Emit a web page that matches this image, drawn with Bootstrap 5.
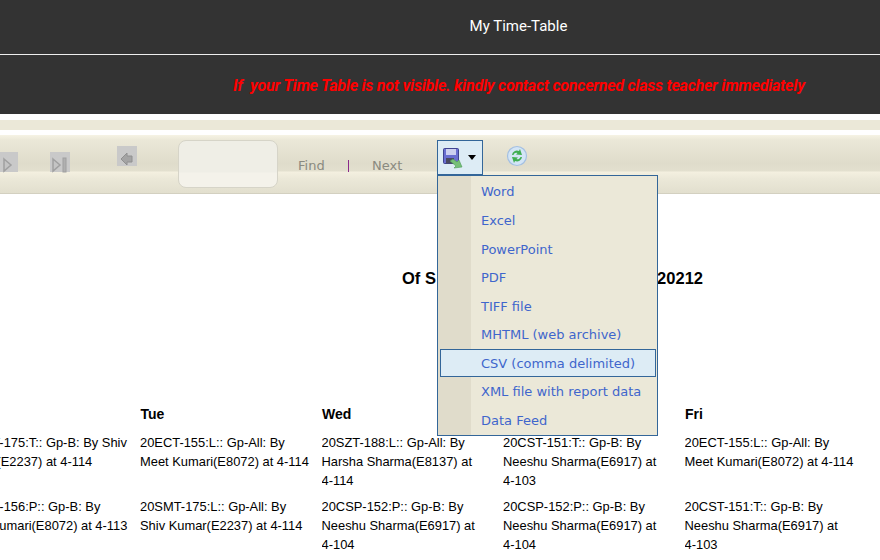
<!DOCTYPE html>
<html lang="en">
<head>
    <meta charset="UTF-8">
    <title>My Time-Table</title>
    <link href="https://cdn.jsdelivr.net/npm/bootstrap@5.3.3/dist/css/bootstrap.min.css" rel="stylesheet">
    <style>
        html, body { overflow: hidden; }
        body { width: 880px; height: 560px; background: #fff; font-family: "Liberation Sans", Arial, sans-serif; }
        .hdr-title { height: 54px; background: #333; color: #fff; font: 15px/52px Roboto, sans-serif; padding-left: 157px; }
        .hdr-rule { height: 1px; background: #eee; }
        .hdr-notice { height: 59px; background: #333; color: #f00; font: italic 700 16px/61px Roboto, sans-serif; letter-spacing: -.24px; padding-left: 233px; white-space: nowrap; }
        .strip-gap { height: 6px; }
        .strip-tan { height: 10px; background: #ebe8d8; }
        .strip-gap2 { height: 5px; }
        .tbar { height: 59px; position: relative; border-bottom: 1px solid #d3d0c0;
            background: linear-gradient(#f6f3e4 0, #ebe8d8 5px, #dfdccb 28px, #e3e0cf 36px, #f4f0e0 37px, #ebe8d8 44px, #e2dfce 58px); }
        .tb-btn { position: absolute; width: 20px; height: 20px; background: #c9c9c9; }
        .tb-find { position: absolute; left: 178px; top: 5px; width: 100px; height: 48px; border: 1px solid #d6d4c8; border-radius: 8px;
            background: linear-gradient(#efeee6 0, #efeee6 31px, #f4f2ea 32px); }
        .tb-link { position: absolute; top: 23px; font: 13px "DejaVu Sans", sans-serif; color: #8a8a80; }
        .tb-sep { position: absolute; left: 348px; top: 25px; width: 1px; height: 12px; background: #8a2a8a; }
        .tb-save { position: absolute; left: 437px; top: 5px; width: 46px; height: 35px; background: #ddecf5; border: 1px solid #336699; }
        .tb-caret { position: absolute; left: 30px; top: 14px; border: 4px solid transparent; border-top: 5px solid #000; border-bottom: 0; }
        .export-menu { position: absolute; left: 437px; top: 175px; width: 221px; height: 261px; background: #ebe8d8; border: 1px solid #336699; z-index: 5; padding: 1.4px 1px 0 2px; }
        .export-menu::before { content: ""; position: absolute; left: 0; top: 0; bottom: 0; width: 33px; background: #e0dccb; }
        .export-item { position: relative; display: block; height: 28.58px; padding-left: 41px; font: 13px/29px "DejaVu Sans", sans-serif; color: #3f66cc; text-decoration: none; white-space: nowrap; }
        .export-item.is-hover { background: #ddecf5; border: 1px solid #336699; padding-left: 40px; line-height: 27px; }
        .rpt-title { width: 301px; margin: 75px 0 0 402px; font-size: 16.5px; font-weight: 700; color: #000; line-height: 18px; }
        .tt-grid { display: grid; grid-template-columns: repeat(5, 181.5px); margin: 117px 0 0 -41.5px; width: 920px; font-size: 12.9px; line-height: 19px; color: #000; }
        .tt-head { font-size: 14px; font-weight: 700; height: 29px; line-height: 20px; padding-left: .5px; }
        .tt-cell { padding-right: 8px; height: 64px; overflow: hidden; }
    </style>
</head>
<body>
    <div class="hdr-title text-center">My Time-Table</div>
    <div class="hdr-rule"></div>
    <div class="hdr-notice">If&nbsp; your Time Table is not visible. kindly contact concerned class teacher immediately</div>
    <div class="strip-gap"></div>
    <div class="strip-tan"></div>
    <div class="strip-gap2"></div>

    <div class="tbar">
        <div class="tb-btn" style="left:-2px;top:17px">
            <svg width="20" height="20" viewBox="0 0 20 20"><path d="M6 4l7 6-7 6z" fill="#c4c4c4" stroke="#a0a0a0" stroke-width="1.500"/></svg>
        </div>
        <div class="tb-btn" style="left:50px;top:17px">
            <svg width="20" height="20" viewBox="0 0 20 20"><path d="M3 4l7 6-7 6z" fill="#c4c4c4" stroke="#a0a0a0" stroke-width="1.500"/><rect x="13" y="3" width="3" height="14" fill="#b0b0b0" stroke="#a0a0a0"/></svg>
        </div>
        <div class="tb-btn" style="left:117px;top:11px">
            <svg width="20" height="20" viewBox="0 0 20 20"><path d="M4 10l6-6v3h5v6h-5v3z" fill="#a4a4a4" stroke="#909090"/></svg>
        </div>
        <div class="tb-find"></div>
        <span class="tb-link" style="left:298px">Find</span>
        <div class="tb-sep"></div>
        <span class="tb-link" style="left:372px">Next</span>
        <div class="tb-save">
            <svg class="position-absolute" style="left:5px;top:7px" width="22" height="22" viewBox="0 0 22 22">
                <rect x=".5" y=".5" width="15" height="15" rx="1" fill="#6a6ed0" stroke="#3f4390"/>
                <rect x="3" y="1" width="10" height="6" fill="#cdd0f0"/>
                <rect x="3" y="10" width="8" height="5.500" fill="#4a4a60"/>
                <path d="M7 13l3-2 4 3 2-2 3 7-8 1 2-2z" fill="#76c078" stroke="#4c9a58" stroke-width=".6"/>
            </svg>
            <span class="tb-caret"></span>
        </div>
        <svg class="position-absolute" style="left:506px;top:10px" width="22" height="22" viewBox="0 0 22 22">
            <circle cx="11" cy="11" r="9.500" fill="#d3e5f6" stroke="#a4c0e2" stroke-width="1.200"/>
            <path d="M6 10a5 5 0 0 1 7-4l1-2 2 6-6-.5 1.500-1.500a3 3 0 0 0-4 2z" fill="#3fae52"/>
            <path d="M16 12a5 5 0 0 1-7 4l-1 2-2-6 6 .5-1.500 1.500a3 3 0 0 0 4-2z" fill="#3fae52"/>
        </svg>
    </div>

    <div class="export-menu">
        <a class="export-item" href="#">Word</a>
        <a class="export-item" href="#">Excel</a>
        <a class="export-item" href="#">PowerPoint</a>
        <a class="export-item" href="#">PDF</a>
        <a class="export-item" href="#">TIFF file</a>
        <a class="export-item" href="#">MHTML (web archive)</a>
        <a class="export-item is-hover" href="#">CSV (comma delimited)</a>
        <a class="export-item" href="#">XML file with report data</a>
        <a class="export-item" href="#">Data Feed</a>
    </div>

    <div class="rpt-title d-flex justify-content-between"><span>Of S</span><span>20212</span></div>

    <div class="tt-grid">
        <div class="tt-head"></div>
        <div class="tt-head">Tue</div>
        <div class="tt-head">Wed</div>
        <div class="tt-head"></div>
        <div class="tt-head">Fri</div>
        <div class="tt-cell">20SMT-175:T:: Gp-B: By Shiv Kumar(E2237) at <span class="text-nowrap">4-114</span></div>
        <div class="tt-cell">20ECT-155:L:: Gp-All: By Meet Kumari(E8072) at <span class="text-nowrap">4-114</span></div>
        <div class="tt-cell">20SZT-188:L:: Gp-All: By Harsha Sharma(E8137) at <span class="text-nowrap">4-114</span></div>
        <div class="tt-cell">20CST-151:T:: Gp-B: By Neeshu Sharma(E6917) at <span class="text-nowrap">4-103</span></div>
        <div class="tt-cell">20ECT-155:L:: Gp-All: By Meet Kumari(E8072) at <span class="text-nowrap">4-114</span></div>
        <div class="tt-cell">20ECP-156:P:: Gp-B: By Meet Kumari(E8072) at <span class="text-nowrap">4-113</span></div>
        <div class="tt-cell">20SMT-175:L:: Gp-All: By Shiv Kumar(E2237) at <span class="text-nowrap">4-114</span></div>
        <div class="tt-cell">20CSP-152:P:: Gp-B: By Neeshu Sharma(E6917) at <span class="text-nowrap">4-104</span></div>
        <div class="tt-cell">20CSP-152:P:: Gp-B: By Neeshu Sharma(E6917) at <span class="text-nowrap">4-104</span></div>
        <div class="tt-cell">20CST-151:T:: Gp-B: By Neeshu Sharma(E6917) at <span class="text-nowrap">4-103</span></div>
    </div>

    <script src="https://cdn.jsdelivr.net/npm/bootstrap@5.3.3/dist/js/bootstrap.bundle.min.js"></script>
</body>
</html>
